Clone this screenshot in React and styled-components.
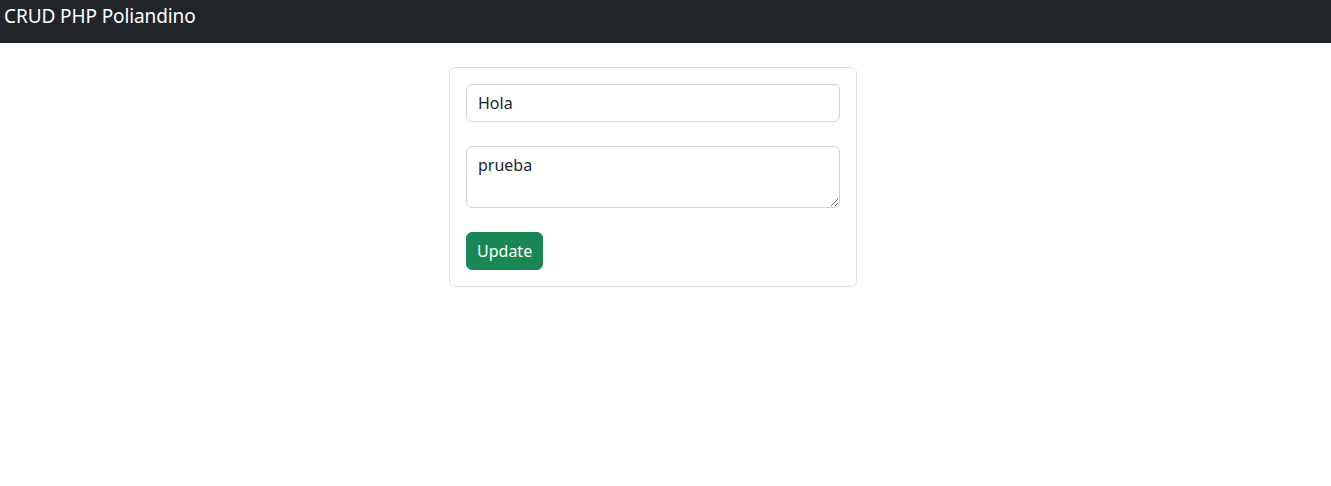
import React from "react";
import styled, { createGlobalStyle } from "styled-components";

const GlobalStyle = createGlobalStyle`
  * { box-sizing: border-box; }
  body {
    margin: 0;
    background: #fff;
    color: #212529;
    font-family: "Noto Sans", "Open Sans", sans-serif;
  }
`;

const NavBar = styled.nav`
  height: 43px;
  background: #212529;
  display: flex;
  align-items: flex-start;
`;

const Brand = styled.a`
  padding: 0 4px;
  line-height: 32px;
  font-size: 19px;
  letter-spacing: -0.1px;
  color: #fff;
  text-decoration: none;
`;

const Main = styled.main`
  padding-top: 24px;
`;

const Card = styled.div`
  width: 408px;
  margin-left: 449px;
  padding: 16px;
  border: 1px solid rgba(0, 0, 0, 0.125);
  border-radius: 6px;
  display: flex;
  flex-direction: column;
  gap: 24px;
`;

const fieldCss = `
  display: block;
  width: 100%;
  padding: 6px 11px;
  font-family: inherit;
  font-size: 16px;
  line-height: 24px;
  color: #212529;
  background: #fff;
  border: 1px solid #ced4da;
  border-radius: 6px;
  outline: none;
`;

const Input = styled.input`
  ${fieldCss}
  height: 38px;
`;

const TextArea = styled.textarea`
  ${fieldCss}
  height: 62px;
  resize: vertical;
`;

const Button = styled.button`
  align-self: flex-start;
  height: 38px;
  padding: 6px 10px;
  font-family: inherit;
  font-size: 16px;
  line-height: 24px;
  color: #fff;
  background: #198754;
  border: 1px solid #198754;
  border-radius: 6px;
  cursor: pointer;
`;

export default function App() {
  return (
    <>
      <GlobalStyle />
      <NavBar>
        <Brand href="#">CRUD PHP Poliandino</Brand>
      </NavBar>
      <Main>
        <Card>
          <Input defaultValue="Hola" />
          <TextArea defaultValue="prueba" />
          <Button>Update</Button>
        </Card>
      </Main>
    </>
  );
}
